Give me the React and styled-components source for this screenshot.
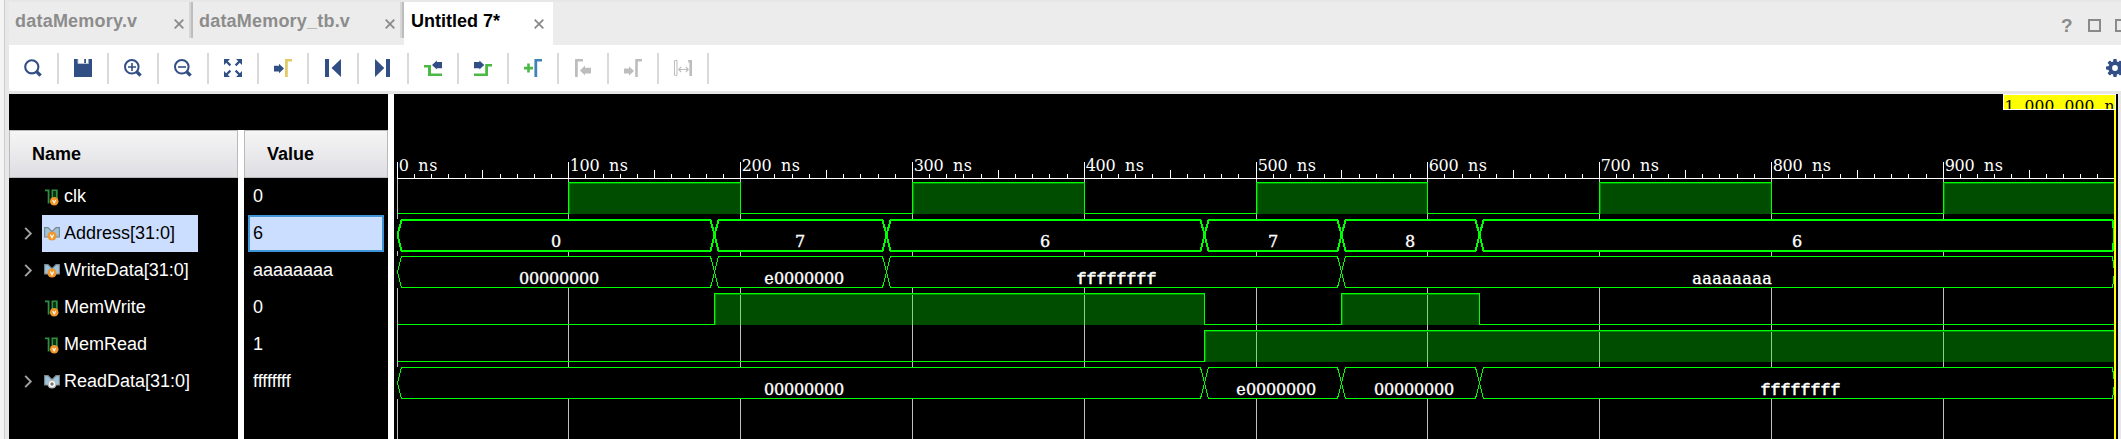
import React from "react";
import styled, { createGlobalStyle } from "styled-components";

const GlobalStyle = createGlobalStyle`
  html, body { margin: 0; padding: 0; }
  body {
    width: 2121px;
    height: 439px;
    overflow: hidden;
    background: #f0f0f0;
    font-family: "Liberation Sans", Arial, sans-serif;
  }
  svg { display: block; }
`;

const NAVY = "#324f85";
const GREEN = "#4cb944";
const GREY = "#bdbdbd";
const WAVE = "#00ff00";

/* ---------- shell ---------- */

const Window = styled.div`
  box-sizing: border-box;
  display: flex;
  width: 2121px;
  height: 439px;
  overflow: hidden;
  background: #e7e7e7;
`;

const Gutter = styled.div`
  box-sizing: border-box;
  flex: none;
  width: 9px;
  background: #e8e8e8;
  border-left: 4px solid #f4f4f4;
  box-shadow: inset 1px 0 0 #cccccc;
`;

const Main = styled.div`
  flex: none;
  display: flex;
  flex-direction: column;
  width: 2112px;
  padding-top: 2px;
  overflow: hidden;
`;

/* ---------- tabs ---------- */

const TabBar = styled.div`
  flex: none;
  display: flex;
  height: 43px;
  background: #ececec;
`;

const Tab = styled.div`
  box-sizing: border-box;
  flex: none;
  display: flex;
  justify-content: space-between;
  width: ${(p) => p.$width}px;
  height: 43px;
  padding: ${(p) => (p.$active ? "0 9px 0 7px" : "0 5px 0 6px")};
  background: ${(p) => (p.$active ? "#ffffff" : "transparent")};
  color: ${(p) => (p.$active ? "#000000" : "#8c8c8c")};
`;

const TabTitle = styled.span`
  font-size: 18px;
  font-weight: bold;
  line-height: 21px;
  padding-top: 9px;
  white-space: nowrap;
  letter-spacing: ${(p) => p.$spacing}px;
`;

const CloseIcon = styled.svg`
  flex: none;
  width: 10px;
  height: 10px;
  margin-top: 17px;
`;

const TabDivider = styled.div`
  box-sizing: border-box;
  flex: none;
  width: 4px;
  height: 36px;
  background: #d6d6d6;
  border-right: 2px solid #bdbdbd;
`;

const WindowControls = styled.div`
  flex: none;
  display: flex;
  align-items: flex-start;
  margin-left: auto;
  padding-top: 17px;
  width: 60px;
`;

const Help = styled.span`
  flex: none;
  width: 27px;
  margin-top: -3px;
  font-size: 19px;
  line-height: 20px;
  font-weight: bold;
  color: #8a8a8a;
`;

const Square = styled.span`
  box-sizing: border-box;
  flex: none;
  width: 13px;
  height: 13px;
  margin-right: 14px;
  border: 2px solid #8a8a8a;
`;

/* ---------- toolbar ---------- */

const Toolbar = styled.div`
  flex: none;
  display: flex;
  align-items: center;
  height: 46px;
  background: #ffffff;
  border-bottom: 3px solid #e6e6e6;
`;

const ToolButton = styled.button`
  box-sizing: border-box;
  flex: none;
  width: 50px;
  height: 31px;
  margin: 0;
  padding: 0 0 0 15px;
  border: 0;
  border-right: 2px solid #d9d9d9;
  background: transparent;
`;

const ToolIcon = styled.svg`
  width: 18px;
  height: 18px;
`;

const Settings = styled.div`
  flex: none;
  margin-left: auto;
  width: 15px;
  height: 18px;
`;

/* ---------- signal table ---------- */

const Body = styled.div`
  flex: 1;
  display: flex;
  min-height: 0;
`;

const SignalPane = styled.div`
  flex: none;
  display: flex;
  flex-direction: column;
  width: 379px;
  background: #000000;
`;

const Columns = styled.div`
  flex: 1;
  display: flex;
  gap: 6px;
  margin-top: 36px;
  background: #ffffff;
`;

const Column = styled.div`
  flex: none;
  width: ${(p) => p.$width}px;
  background: #000000;
`;

const ColumnHeader = styled.div`
  box-sizing: border-box;
  height: 48px;
  padding-left: 22px;
  border: 1px solid #b9b9bb;
  background: linear-gradient(#f5f5f5, #dedee3);
  font-size: 18px;
  font-weight: bold;
  line-height: 46px;
  color: #000000;
`;

const NameRow = styled.div`
  display: flex;
  align-items: center;
  height: 37px;
`;

const Expander = styled.svg`
  flex: none;
  width: 33px;
  height: 37px;
`;

const NameCell = styled.div`
  box-sizing: border-box;
  display: flex;
  align-items: center;
  gap: 4px;
  width: 156px;
  height: 37px;
  padding-left: 2px;
  font-size: 18px;
  line-height: 37px;
  white-space: nowrap;
  background: ${(p) => (p.$selected ? "#cbdeff" : "transparent")};
  color: ${(p) => (p.$selected ? "#000000" : "#ffffff")};
`;

const ValueCell = styled.div`
  box-sizing: border-box;
  width: 136px;
  height: 37px;
  margin-left: 4px;
  padding-left: 3px;
  border: 2px solid ${(p) => (p.$selected ? "#3f95d6" : "transparent")};
  background: ${(p) => (p.$selected ? "#cbdeff" : "transparent")};
  color: ${(p) => (p.$selected ? "#000000" : "#ffffff")};
  font-size: 18px;
  line-height: 33px;
`;

const SignalIcon = styled.svg`
  flex: none;
  width: 16px;
  height: 18px;
`;

const Splitter = styled.div`
  flex: none;
  width: 6px;
  background: #ffffff;
`;

/* ---------- wave viewer ---------- */

const WavePane = styled.div`
  flex: none;
  position: relative;
  width: 1724px;
  height: 345px;
  background: #000000;
`;

const CursorLine = styled.div`
  position: absolute;
  left: 1720px;
  top: 16px;
  width: 2px;
  bottom: 0;
  background: #ffff00;
`;

const CursorLabel = styled.div`
  position: absolute;
  box-sizing: border-box;
  left: 1609px;
  top: 0;
  width: 113px;
  height: 16px;
  overflow: hidden;
  border: 1px solid #ffffff;
  background: #ffff00;
`;

const Mono = styled.text`
  font-family: ${(p) =>
    p.$wide ? '"Liberation Mono", monospace' : '"DejaVu Serif", "Liberation Serif", serif'};
  font-size: ${(p) => p.$size || 16}px;
  fill: ${(p) => p.$color || "#ffffff"};
  stroke: ${(p) => p.$color || "#ffffff"};
  stroke-width: ${(p) => p.$weight || 0};
  text-anchor: middle;
`;

/* Fixed-pitch text: every character is centred in its own cell. */
const CellText = ({ x, y, pitch, children, color, size, weight, wide }) => (
  <Mono
    x={[...children].map((_, i) => (x + pitch * (i + 0.5)).toFixed(1)).join(" ")}
    y={y}
    $color={color}
    $size={size}
    $weight={weight}
    $wide={wide}
  >
    {children}
  </Mono>
);

const ICONS = {
  search: (
    <g stroke={NAVY} fill="none">
      <circle cx="7.8" cy="7.8" r="6.6" strokeWidth="2.1" />
      <path d="M12.6 12.6L16.6 16.6" strokeWidth="3.4" />
    </g>
  ),
  save: (
    <g>
      <path d="M0 0H4V5H14.5V0H18V18H0Z" fill={NAVY} />
      <path d="M10.2 0H12V4.2H10.2Z" fill={NAVY} />
      <path d="M4 0V4.5H14" stroke="#b9c4d8" fill="none" />
    </g>
  ),
  zoomIn: (
    <g stroke={NAVY} fill="none">
      <circle cx="7.8" cy="7.8" r="6.8" strokeWidth="2" />
      <path d="M12.6 12.6L16.6 16.6" strokeWidth="3.4" />
      <path d="M4 8H12M8 4V12" strokeWidth="1.6" />
    </g>
  ),
  zoomOut: (
    <g stroke={NAVY} fill="none">
      <circle cx="7.8" cy="7.8" r="6.8" strokeWidth="2" />
      <path d="M12.6 12.6L16.6 16.6" strokeWidth="3.4" />
      <path d="M4 8H12" strokeWidth="1.6" />
    </g>
  ),
  fit: (
    <g fill={NAVY} stroke={NAVY}>
      <path
        stroke="none"
        d="M0 0H6L0 6ZM18 0V6L12 0ZM0 18V12L6 18ZM18 18H12L18 12Z"
      />
      <path
        fill="none"
        strokeWidth="2.2"
        d="M2 2L6.4 6.4M16 2L11.6 6.4M2 16L6.4 11.6M16 16L11.6 11.6"
      />
    </g>
  ),
  toCursor: (
    <g>
      <path d="M0 6.8H5V4.8L10 9.5L5 14.2V12.4H0Z" fill={NAVY} />
      <path d="M11 0H18V2.6H13.8V18H11Z" fill="#e2ca66" />
    </g>
  ),
  first: <path d="M1 0H5V18H1ZM17 0V18L7.5 9Z" fill={NAVY} />,
  last: <path d="M1 0L10.3 9L1 18ZM12 0H16V18H12Z" fill={NAVY} />,
  prevEdge: (
    <g>
      <path d="M0 6H7V14.4H18V17H4V8.6H0Z" fill={GREEN} />
      <path d="M8 6L12.8 1.4V3H18V9.2H12.8V10.6Z" fill={NAVY} />
    </g>
  ),
  nextEdge: (
    <g>
      <path d="M0 14.4H11.2V5H18V7.6H14V17H0Z" fill={GREEN} />
      <path d="M0 3H5.4V1.4L10.2 6L5.4 10.6V9.2H0Z" fill={NAVY} />
    </g>
  ),
  addMarker: (
    <g>
      <path d="M3.2 4.4H5.8V7.8H9V10.4H5.8V13.6H3.2V10.4H0V7.8H3.2Z" fill={GREEN} />
      <path d="M10.4 0H18V2.6H13.2V18H10.4Z" fill="#3f84b4" />
    </g>
  ),
  prevMarker: (
    <path
      d="M1 0H9V2.6H3.8V18H1ZM6 11.5L11 6.4V8.8H17V14.4H11V16.6Z"
      fill={GREY}
    />
  ),
  nextMarker: (
    <path
      d="M11.2 0H18V2.6H13.8V18H11.2ZM0 9.4H5V7.2L10 12L5 16.8V14.6H0Z"
      fill={GREY}
    />
  ),
  swap: (
    <g stroke={GREY} fill="none">
      <path d="M0.5 1.5H3V16.3H0.5Z" />
      <path d="M14.2 1H18V17H15.4V3.4H14.2Z" fill={GREY} stroke="none" />
      <path d="M5 10.5H14M7.2 7.8L4.8 10.5L7.2 13.2M11.8 7.8L14.2 10.5L11.8 13.2" strokeWidth="1.2" />
    </g>
  ),
};

const TOOLS = [
  "search", "save", "zoomIn", "zoomOut", "fit", "toCursor", "first",
  "last", "prevEdge", "nextEdge", "addMarker", "prevMarker", "nextMarker", "swap",
];

const Gear = () => (
  <svg width="18" height="18" viewBox="0 0 18 18">
    <g fill={NAVY}>
      {[0, 45, 90, 135].map((a) => (
        <rect key={a} x="7.2" y="0" width="3.6" height="18" rx="1" transform={`rotate(${a} 9 9)`} />
      ))}
      <circle cx="9" cy="9" r="6.8" />
    </g>
    <circle cx="9" cy="9" r="2.9" fill="#ffffff" />
  </svg>
);

const Close = () => (
  <CloseIcon viewBox="0 0 10 10">
    <path d="M0.7 0.7L9.3 9.3M9.3 0.7L0.7 9.3" stroke="#8a8a8a" strokeWidth="1.8" />
  </CloseIcon>
);

const ScalarGlyph = () => (
  <SignalIcon viewBox="0 0 16 18">
    <path d="M1 2.4H4.6V15.5M8.4 14V2.4H12.8V12" fill="none" stroke="#2f9140" strokeWidth="1.8" />
    <path d="M9 3.4H12V11H9Z" fill="#0c3513" />
    <circle cx="10.2" cy="13.2" r="4.3" fill="#f3962a" />
    <path d="M8.7 12L10.2 15L11.7 12" fill="none" stroke="#ffffff" strokeWidth="1.1" />
  </SignalIcon>
);

const BusGlyph = ({ output }) => (
  <SignalIcon viewBox="0 0 16 18">
    <path
      d="M0.6 2.6H4L8 6.6L12 2.6H15.4V12H0.6Z"
      fill="#9cc3d9"
      stroke="#78858c"
      strokeWidth="1.1"
    />
    <circle cx="8" cy="11" r="4.6" fill={output ? "#b9bcbe" : "#f3962a"} />
    {output ? (
      <circle cx="8" cy="11" r="2.4" fill="#777777" stroke="#ffffff" strokeWidth="1.3" />
    ) : (
      <path d="M6.4 9.5L8 12.8L9.6 9.5" fill="none" stroke="#ffffff" strokeWidth="1.2" />
    )}
  </SignalIcon>
);

const SIGNALS = [
  { name: "clk", value: "0", levels: [[0, 0], [100, 1], [200, 0], [300, 1], [400, 0], [500, 1], [600, 0], [700, 1], [800, 0], [900, 1]] },
  { name: "Address[31:0]", value: "6", selected: true, bus: [[0, "0"], [185, "7"], [285, "6"], [470, "7"], [550, "8"], [630, "6"]] },
  { name: "WriteData[31:0]", value: "aaaaaaaa", bus: [[0, "00000000"], [185, "e0000000"], [285, "ffffffff"], [550, "aaaaaaaa"]] },
  { name: "MemWrite", value: "0", levels: [[0, 0], [185, 1], [470, 0], [550, 1], [630, 0]] },
  { name: "MemRead", value: "1", levels: [[0, 0], [470, 1]] },
  { name: "ReadData[31:0]", value: "ffffffff", output: true, bus: [[0, "00000000"], [470, "e0000000"], [550, "00000000"], [630, "ffffffff"]] },
];

const END = 1000;
const xAt = (t) => 3 + Math.floor(t * 1.718 + 0.0001);
const spans = (list) =>
  list.map(([t, v], i) => [xAt(t), xAt(i + 1 < list.length ? list[i + 1][0] : END), v]);

const LevelLane = ({ levels, y }) => (
  <g shapeRendering="crispEdges">
    {spans(levels).map(([a, b, v], i) =>
      v ? (
        <g key={a}>
          <rect x={a} y={y} width={b - a + 1} height="32" fill="#00ff00" fillOpacity="0.3" />
          <path d={`M${a + 1.5} ${y + 32}V${y + 1.5}H${b}`} stroke="#008a00" fill="none" />
          <path d={`M${a + 0.5} ${y + 32}V${y + 0.5}H${b + 1}`} stroke={WAVE} fill="none" />
        </g>
      ) : (
        <path
          key={a}
          d={`M${a + 0.5} ${i ? y : y + 31.5}V${y + 31.5}H${b + 1}`}
          stroke={WAVE}
          fill="none"
        />
      )
    )}
  </g>
);

const BusLane = ({ bus, y, thick }) => (
  <g>
    {spans(bus).map(([a, b, v], i) => {
      const last = i === bus.length - 1;
      const w = thick ? 2 : 1;
      const o = thick ? 1 : 0.5;
      const top = y + o;
      const bottom = y + 31 + o;
      const mid = y + 16;
      const e = last ? b - 1 : b;
      const back = last ? 2 : 4;
      const wide = v[0] === "f";
      return (
        <g key={a}>
          <rect x={a} y={y} width={b - a} height="32" fill="#000000" />
          <path
            d={`M${a + 0.5} ${mid}L${a + 4.5} ${top}H${e + 0.5 - back}L${e + 0.5} ${mid}L${e + 0.5 - back} ${bottom}H${a + 4.5}Z`}
            stroke={WAVE}
            strokeWidth={w}
            fill="none"
            shapeRendering="crispEdges"
          />
          <CellText
            x={Math.floor((a + b) / 2 - 4.5 * v.length) - (wide ? 0.5 : 0)}
            y={y + 28}
            pitch={10}
            size={wide ? 16.7 : 16}
            weight={wide ? 0.6 : 0.35}
            wide={wide}
          >
            {v}
          </CellText>
        </g>
      );
    })}
  </g>
);

const ticks = Array.from({ length: 100 }, (_, i) => i);

const Waveform = () => (
  <svg width="1724" height="345" viewBox="0 0 1724 345">
    <g shapeRendering="crispEdges">
      {ticks.map((i) => {
        const h = i % 10 === 0 ? 16 : i % 5 === 0 ? 8 : 4;
        return <rect key={i} x={xAt(i * 10)} y={84 - h} width="1" height={h} fill="#ffffff" />;
      })}
      {ticks.filter((i) => i % 10 === 0).map((i) => (
        <rect key={i} x={xAt(i * 10)} y="85" width="1" height="260" fill="#c0c0c0" />
      ))}
      <rect x="3" y="84" width="1717" height="1" fill="#ffffff" />
    </g>
    {ticks.filter((i) => i % 10 === 0).map((i) => (
      <CellText key={i} x={xAt(i * 10) + 2} y={77} pitch={9.8} size={16}>
        {`${i * 10} ns`}
      </CellText>
    ))}
    {SIGNALS.map((s, i) =>
      s.bus ? (
        <BusLane key={s.name} bus={s.bus} y={88 + 37 * i} thick={s.selected} />
      ) : (
        <LevelLane key={s.name} levels={s.levels} y={88 + 37 * i} />
      )
    )}
  </svg>
);

export default function App() {
  return (
    <Window>
      <GlobalStyle />
      <Gutter />
      <Main>
        <TabBar>
          <Tab $width={180}>
            <TabTitle $spacing={0.22}>dataMemory.v</TabTitle>
            <Close />
          </Tab>
          <TabDivider />
          <Tab $width={207}>
            <TabTitle $spacing={0.2}>dataMemory_tb.v</TabTitle>
            <Close />
          </Tab>
          <TabDivider />
          <Tab $width={149} $active>
            <TabTitle $spacing={0}>Untitled 7*</TabTitle>
            <Close />
          </Tab>
          <WindowControls>
            <Help>?</Help>
            <Square />
            <Square />
          </WindowControls>
        </TabBar>
        <Toolbar>
          {TOOLS.map((t) => (
            <ToolButton key={t} aria-label={t}>
              <ToolIcon viewBox="0 0 18 18">{ICONS[t]}</ToolIcon>
            </ToolButton>
          ))}
          <Settings>
            <Gear />
          </Settings>
        </Toolbar>
        <Body>
          <SignalPane>
            <Columns>
              <Column $width={229}>
                <ColumnHeader>Name</ColumnHeader>
                {SIGNALS.map((s) => (
                  <NameRow key={s.name}>
                    <Expander viewBox="0 0 33 37">
                      {s.bus && (
                        <path d="M16.2 12.8L21.8 18.5L16.2 24.2" fill="none" stroke="#a2a2a2" strokeWidth="1.9" />
                      )}
                    </Expander>
                    <NameCell $selected={s.selected}>
                      {s.bus ? <BusGlyph output={s.output} /> : <ScalarGlyph />}
                      <span>{s.name}</span>
                    </NameCell>
                  </NameRow>
                ))}
              </Column>
              <Column $width={144}>
                <ColumnHeader>Value</ColumnHeader>
                {SIGNALS.map((s) => (
                  <ValueCell key={s.name} $selected={s.selected}>
                    {s.value}
                  </ValueCell>
                ))}
              </Column>
            </Columns>
          </SignalPane>
          <Splitter />
          <WavePane>
            <Waveform />
            <CursorLine />
            <CursorLabel>
              <svg width="111" height="14" viewBox="0 0 111 14">
                <CellText x={0.5} y={15.5} pitch={10} size={15.5} color="#000000">
                  1,000,000 n
                </CellText>
              </svg>
            </CursorLabel>
          </WavePane>
        </Body>
      </Main>
    </Window>
  );
}
